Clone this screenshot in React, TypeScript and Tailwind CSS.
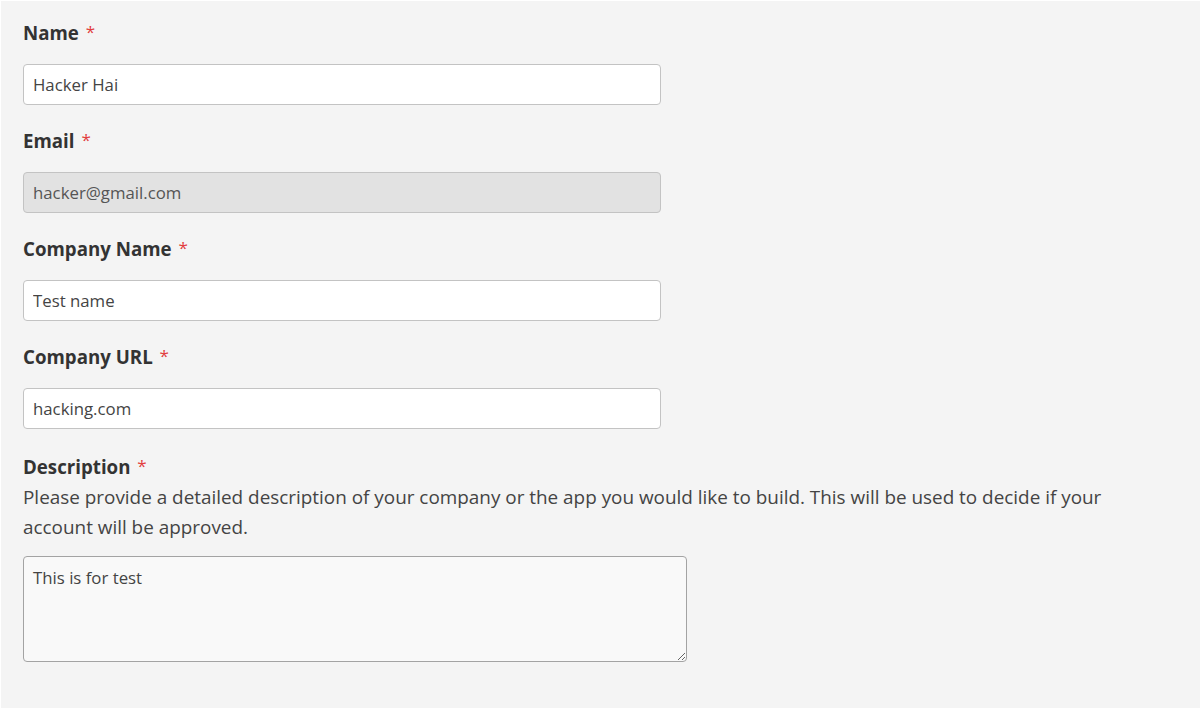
import { FC } from "react";

interface FieldProps {
  label: string;
  value: string;
  disabled?: boolean;
}

const Label: FC<{ text: string }> = ({ text }) => (
  <div className="h-[27px] leading-[26px] text-[18.7px] font-bold text-[#333]">
    {text}{" "}
    <span className="relative top-[-2px] ml-[2px] text-[17px] font-normal text-[#e23d3d]">*</span>
  </div>
);

const Field: FC<FieldProps> = ({ label, value, disabled }) => (
  <div className="mb-[23px]">
    <Label text={label} />
    <input
      readOnly
      defaultValue={value}
      className={`mt-[17px] block h-[41px] w-[638px] rounded-[4px] border border-[#c3c3c3] px-[9px] text-[16.8px] outline-none ${
        disabled ? "bg-[#e2e2e2] text-[#555]" : "bg-white text-[#444]"
      }`}
    />
  </div>
);

export default function App() {
  return (
    <div
      className="min-h-[708px] w-full border-t border-l border-white bg-[#f4f4f4] px-[22px] pt-[19px]"
      style={{ fontFamily: '"Open Sans", "Noto Sans", sans-serif' }}
    >
      <Field label="Name" value="Hacker Hai" />
      <Field label="Email" value="hacker@gmail.com" disabled />
      <Field label="Company Name" value="Test name" />
      <Field label="Company URL" value="hacking.com" />

      <div className="pt-[2px]">
        <Label text="Description" />
        <p className="mt-[1px] w-[1100px] text-[18.9px] leading-[30px] text-[#444]">
          Please provide a detailed description of your company or the app you
          would like to build. This will be used to decide if your account will
          be approved.
        </p>
        <textarea
          readOnly
          defaultValue="This is for test"
          className="mt-[14px] block h-[106px] w-[664px] rounded-[4px] border border-[#a3a3a3] bg-[#f9f9f9] px-[9px] py-[8px] text-[16.8px] text-[#444] outline-none"
        />
      </div>
    </div>
  );
}
